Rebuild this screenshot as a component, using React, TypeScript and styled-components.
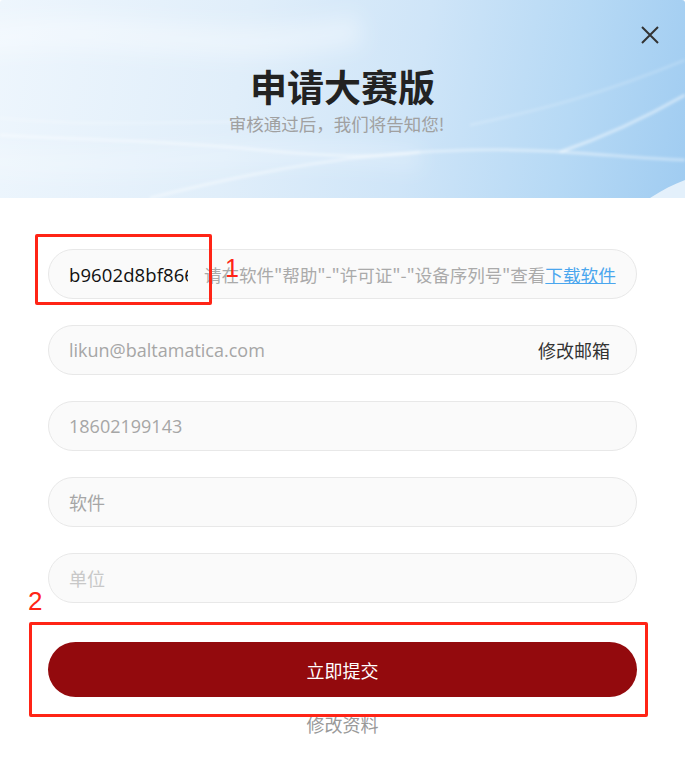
import React from "react";
import styled, { createGlobalStyle } from "styled-components";

const GlobalStyle = createGlobalStyle`
  html, body { margin: 0; padding: 0; background: #ffffff; }
  body { font-family: "Open Sans", "Noto Sans CJK SC", sans-serif; }
  * { box-sizing: border-box; }
`;

const Modal = styled.div`
  position: relative;
  width: 685px;
  height: 757px;
  background: #ffffff;
  overflow: hidden;
  border-radius: 3px;
`;

const Header = styled.header`
  position: relative;
  height: 198px;
  background: linear-gradient(100deg, #eef6fd 0%, #e0eefa 35%, #cfe5f8 60%, #b6d9f5 82%, #a0ccf1 100%);
  display: flex;
  flex-direction: column;
  align-items: center;
  padding-top: 60px;
  overflow: hidden;
`;

const Waves = styled.svg`
  position: absolute;
  inset: 0;
  width: 100%;
  height: 100%;
  pointer-events: none;
`;

const Title = styled.h1`
  position: relative;
  margin: 0;
  font-family: "Noto Sans CJK SC", sans-serif;
  font-size: 37px;
  font-weight: 700;
  line-height: 52px;
  color: #222222;
`;

const Subtitle = styled.p`
  position: relative;
  margin: 0 12px 0 0;
  font-family: "Noto Sans CJK SC", sans-serif;
  font-size: 17.5px;
  line-height: 24px;
  color: #a0a0a0;
`;

const CloseButton = styled.button`
  position: absolute;
  top: 22px;
  right: 22px;
  width: 26px;
  height: 26px;
  padding: 0;
  border: none;
  background: transparent;
  display: flex;
  align-items: center;
  justify-content: center;
  cursor: pointer;
`;

const Form = styled.div`
  display: flex;
  flex-direction: column;
  padding: 51px 48px 0;
`;

const Fields = styled.div`
  display: flex;
  flex-direction: column;
  gap: 26px;
`;

const Field = styled.div`
  height: 50px;
  border: 1px solid #e8e8e8;
  background: #fafafa;
  border-radius: 25px;
  display: flex;
  align-items: center;
  padding: 0 20px;
  font-size: 18px;
`;

const ValueInput = styled.input`
  width: 119px;
  flex: none;
  border: none;
  outline: none;
  background: transparent;
  padding: 0;
  font-family: "Open Sans", "Noto Sans CJK SC", sans-serif;
  font-size: 18.5px;
  letter-spacing: 0.1px;
  color: #111111;
`;

const Hint = styled.span`
  margin-left: 16px;
  font-family: "Noto Sans CJK SC", sans-serif;
  font-size: 17.6px;
  letter-spacing: -0.1px;
  color: #aaaaaa;
  white-space: nowrap;
`;

const Link = styled.a`
  font-family: "Noto Sans CJK SC", sans-serif;
  font-size: 17.6px;
  color: #4aa6ee;
  text-decoration: underline;
  white-space: nowrap;
`;

const FieldText = styled.span<{ $tone: "value" | "placeholder" }>`
  flex: 1;
  font-family: "Open Sans", "Noto Sans CJK SC", sans-serif;
  font-size: 18px;
  color: ${(p) => (p.$tone === "value" ? "#a6a6a6" : "#c8c8c8")};
  white-space: nowrap;
`;

const FieldAction = styled.span`
  font-family: "Noto Sans CJK SC", sans-serif;
  color: #333333;
  margin-right: 6px;
`;

const SubmitButton = styled.button`
  margin-top: 39px;
  height: 55px;
  border: none;
  border-radius: 28px;
  background: #930a0d;
  color: #ffffff;
  font-family: "Noto Sans CJK SC", sans-serif;
  font-size: 18px;
  cursor: pointer;
`;

const SecondaryLink = styled.div`
  margin-top: 14px;
  text-align: center;
  font-family: "Noto Sans CJK SC", sans-serif;
  font-size: 18px;
  color: #999999;
  line-height: 26px;
`;

const Marker = styled.div<{ $l: number; $t: number; $w: number; $h: number }>`
  position: absolute;
  left: ${(p) => p.$l}px;
  top: ${(p) => p.$t}px;
  width: ${(p) => p.$w}px;
  height: ${(p) => p.$h}px;
  border: 3px solid #ff2416;
  border-radius: 2px;
  pointer-events: none;
`;

const MarkerLabel = styled.span<{ $l: number; $t: number; $s: number }>`
  position: absolute;
  left: ${(p) => p.$l}px;
  top: ${(p) => p.$t}px;
  font-family: "Liberation Sans", sans-serif;
  font-size: ${(p) => p.$s}px;
  line-height: 1;
  color: #ff2416;
  pointer-events: none;
`;

export default function App() {
  return (
    <>
      <GlobalStyle />
      <Modal>
        <Header>
          <Waves viewBox="0 0 685 198" preserveAspectRatio="none">
            <defs>
              <filter id="soft" filterUnits="userSpaceOnUse" x="-50" y="-50" width="785" height="300">
                <feGaussianBlur stdDeviation="1.6" />
              </filter>
              <filter id="softer" filterUnits="userSpaceOnUse" x="-50" y="-50" width="785" height="300">
                <feGaussianBlur stdDeviation="10" />
              </filter>
            </defs>
            <g filter="url(#softer)">
              <path d="M-20 40 C120 20 220 60 360 30" stroke="#ffffff" strokeOpacity="0.35" strokeWidth="30" fill="none" />
              <path d="M-20 160 C140 175 260 140 420 160" stroke="#ffffff" strokeOpacity="0.25" strokeWidth="18" fill="none" />
            </g>
            <g filter="url(#soft)">
              <path d="M0 135 C80 140 160 140 260 150 C320 156 380 158 420 152" stroke="#ffffff" strokeOpacity="0.55" strokeWidth="2" fill="none" />
              <path d="M150 198 C260 170 360 152 470 150 C560 148 620 158 685 160" stroke="#ffffff" strokeOpacity="0.55" strokeWidth="2.2" fill="none" />
              <path d="M560 152 C610 135 650 115 685 95" stroke="#ffffff" strokeOpacity="0.6" strokeWidth="2.5" fill="none" />
              <path d="M470 125 C540 110 600 95 685 60" stroke="#ffffff" strokeOpacity="0.3" strokeWidth="1.5" fill="none" />
              <path d="M0 118 C100 128 180 120 300 122" stroke="#ffffff" strokeOpacity="0.35" strokeWidth="1.5" fill="none" />
            </g>
            <path d="M650 198 C662 190 674 184 685 180 L685 198 Z" fill="#ffffff" fillOpacity="0.7" />
          </Waves>
          <Title>申请大赛版</Title>
          <Subtitle>审核通过后，我们将告知您!</Subtitle>
          <CloseButton aria-label="关闭">
            <svg width="20" height="20" viewBox="0 0 20 20">
              <path d="M2 2 L18 18 M18 2 L2 18" stroke="#333333" strokeWidth="2" />
            </svg>
          </CloseButton>
        </Header>
        <Form>
          <Fields>
            <Field>
              <ValueInput readOnly defaultValue="b9602d8bf866a1c3e5f7" />
              <Hint>请在软件"帮助"-"许可证"-"设备序列号"查看</Hint>
              <Link>下载软件</Link>
            </Field>
            <Field>
              <FieldText $tone="value">likun@baltamatica.com</FieldText>
              <FieldAction>修改邮箱</FieldAction>
            </Field>
            <Field>
              <FieldText $tone="value">18602199143</FieldText>
            </Field>
            <Field>
              <FieldText $tone="value">软件</FieldText>
            </Field>
            <Field>
              <FieldText $tone="placeholder">单位</FieldText>
            </Field>
          </Fields>
          <SubmitButton>立即提交</SubmitButton>
          <SecondaryLink>修改资料</SecondaryLink>
        </Form>
        <Marker $l={35} $t={234} $w={177} $h={71} />
        <MarkerLabel $l={225} $t={256} $s={25}>1</MarkerLabel>
        <Marker $l={29} $t={622} $w={619} $h={95} />
        <MarkerLabel $l={28} $t={588} $s={26}>2</MarkerLabel>
      </Modal>
    </>
  );
}
